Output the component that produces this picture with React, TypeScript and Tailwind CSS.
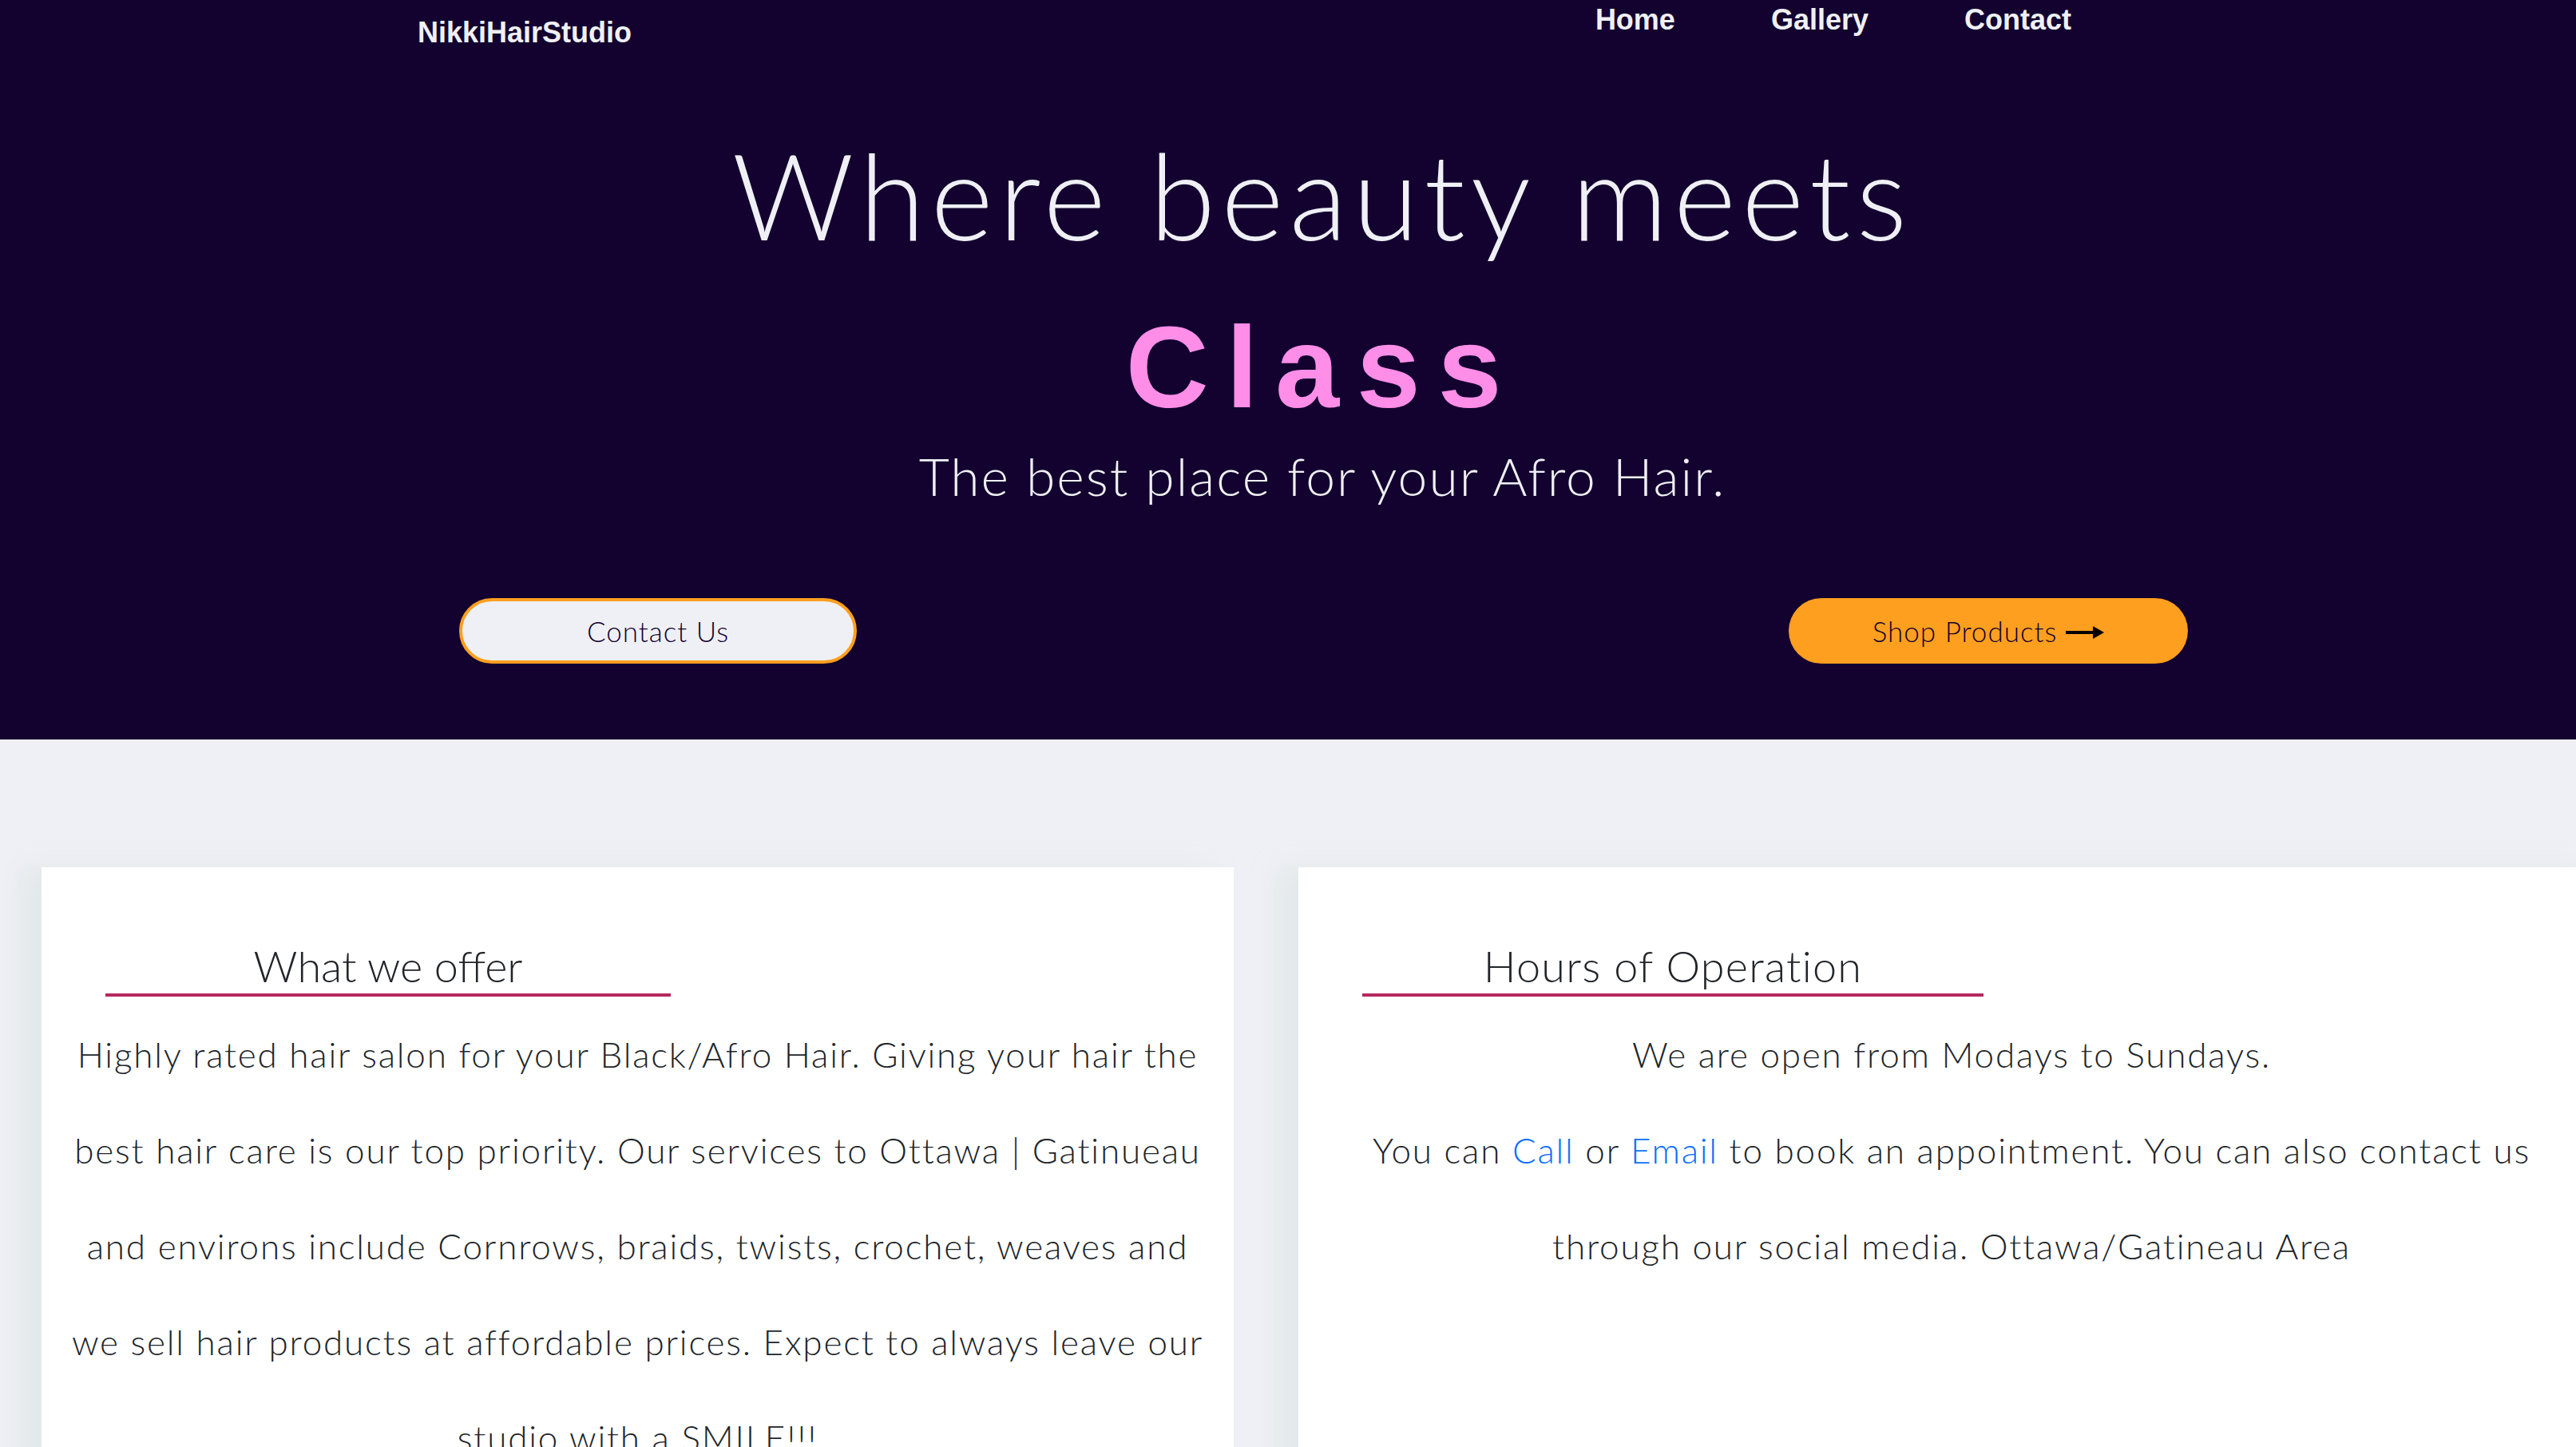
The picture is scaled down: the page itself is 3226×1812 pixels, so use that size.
import React from 'react';

const ArrowRight = () => (
  <svg width="48" height="16" viewBox="0 0 48 16" className="ml-[11px] mt-[4px]">
    <rect x="0" y="6" width="36" height="4" fill="#000" />
    <polygon points="34,0 48,8 34,16" fill="#000" />
  </svg>
);

const App: React.FC = () => {
  return (
    <div className="w-full min-h-screen overflow-hidden bg-[#eff0f5]">
      <div className="w-[3312px]">
        {/* hero */}
        <section className="h-[926px] bg-[#13012f] font-['Lato',sans-serif] text-[#eff0f5]">
          <header className="flex items-start justify-between pl-[523px] pr-[718px] font-['Liberation_Sans',Arial,sans-serif] text-[36px] font-bold leading-none">
            <a className="pt-[23px]">NikkiHairStudio</a>
            <nav className="flex gap-[120px] pt-[7px]">
              <a>Home</a>
              <a>Gallery</a>
              <a>Contact</a>
            </nav>
          </header>

          <div className="flex flex-col items-center">
            <h1 className="mt-[109px] text-[150px] font-light leading-none tracking-[7px]">Where beauty meets</h1>
            <h2 className="mt-[71px] font-['Liberation_Sans',Arial,sans-serif] text-[144px] font-bold leading-none tracking-[0.15em] text-[#ff8ee8]">
              Class
            </h2>
            <p className="mt-[30px] text-[66px] font-light leading-none tracking-[2px]">The best place for your Afro Hair.</p>
          </div>

          <div className="mt-[120px] flex justify-between pl-[575px] pr-[572px]">
            <button className="flex h-[82px] w-[498px] items-center justify-center rounded-full border-4 border-[#ff9f1f] bg-[#eff0f5] text-[35px] font-light tracking-[1px] text-[#13012f]">
              Contact Us
            </button>
            <button className="flex h-[82px] w-[500px] items-center justify-center rounded-full bg-[#ff9f1f] text-[35px] font-light tracking-[1px] text-[#13012f]">
              Shop Products
              <ArrowRight />
            </button>
          </div>
        </section>

        {/* info cards */}
        <section className="grid grid-cols-[1493px_1636px] gap-[81px] pl-[52px] pr-[50px] pt-[160px] font-['Lato',sans-serif] font-light text-[#212529]">
          <div className="min-h-[800px] bg-white pt-[92px] shadow-[-28px_0_28px_rgba(205,222,215,0.35)]">
            <h3 className="ml-[80px] w-[708px] border-b-4 border-[#b5285f] pb-[1px] text-center text-[54px] leading-[1.2]">
              What we offer
            </h3>
            <p className="mt-[12px] text-center text-[44px] leading-[120px] tracking-[1.8px]">
              Highly rated hair salon for your Black/Afro Hair. Giving your hair the
              <br />
              best hair care is our top priority. Our services to Ottawa | Gatinueau
              <br />
              and environs include Cornrows, braids, twists, crochet, weaves and
              <br />
              we sell hair products at affordable prices. Expect to always leave our
              <br />
              studio with a SMILE!!!
            </p>
          </div>

          <div className="min-h-[800px] bg-white pt-[92px] shadow-[-28px_0_28px_rgba(205,222,215,0.35)]">
            <h3 className="ml-[80px] w-[778px] border-b-4 border-[#b5285f] pb-[1px] text-center text-[54px] leading-[1.2] tracking-[1.2px]">
              Hours of Operation
            </h3>
            <div className="mt-[12px] text-center text-[44px] leading-[120px] tracking-[1.8px]">
              <p>We are open from Modays to Sundays.</p>
              <p>
                You can <a className="text-[#0d6efd]">Call</a> or <a className="text-[#0d6efd]">Email</a> to book an
                appointment. You can also contact us
                <br />
                through our social media. Ottawa/Gatineau Area
              </p>
            </div>
          </div>
        </section>
      </div>
    </div>
  );
};

export default App;
